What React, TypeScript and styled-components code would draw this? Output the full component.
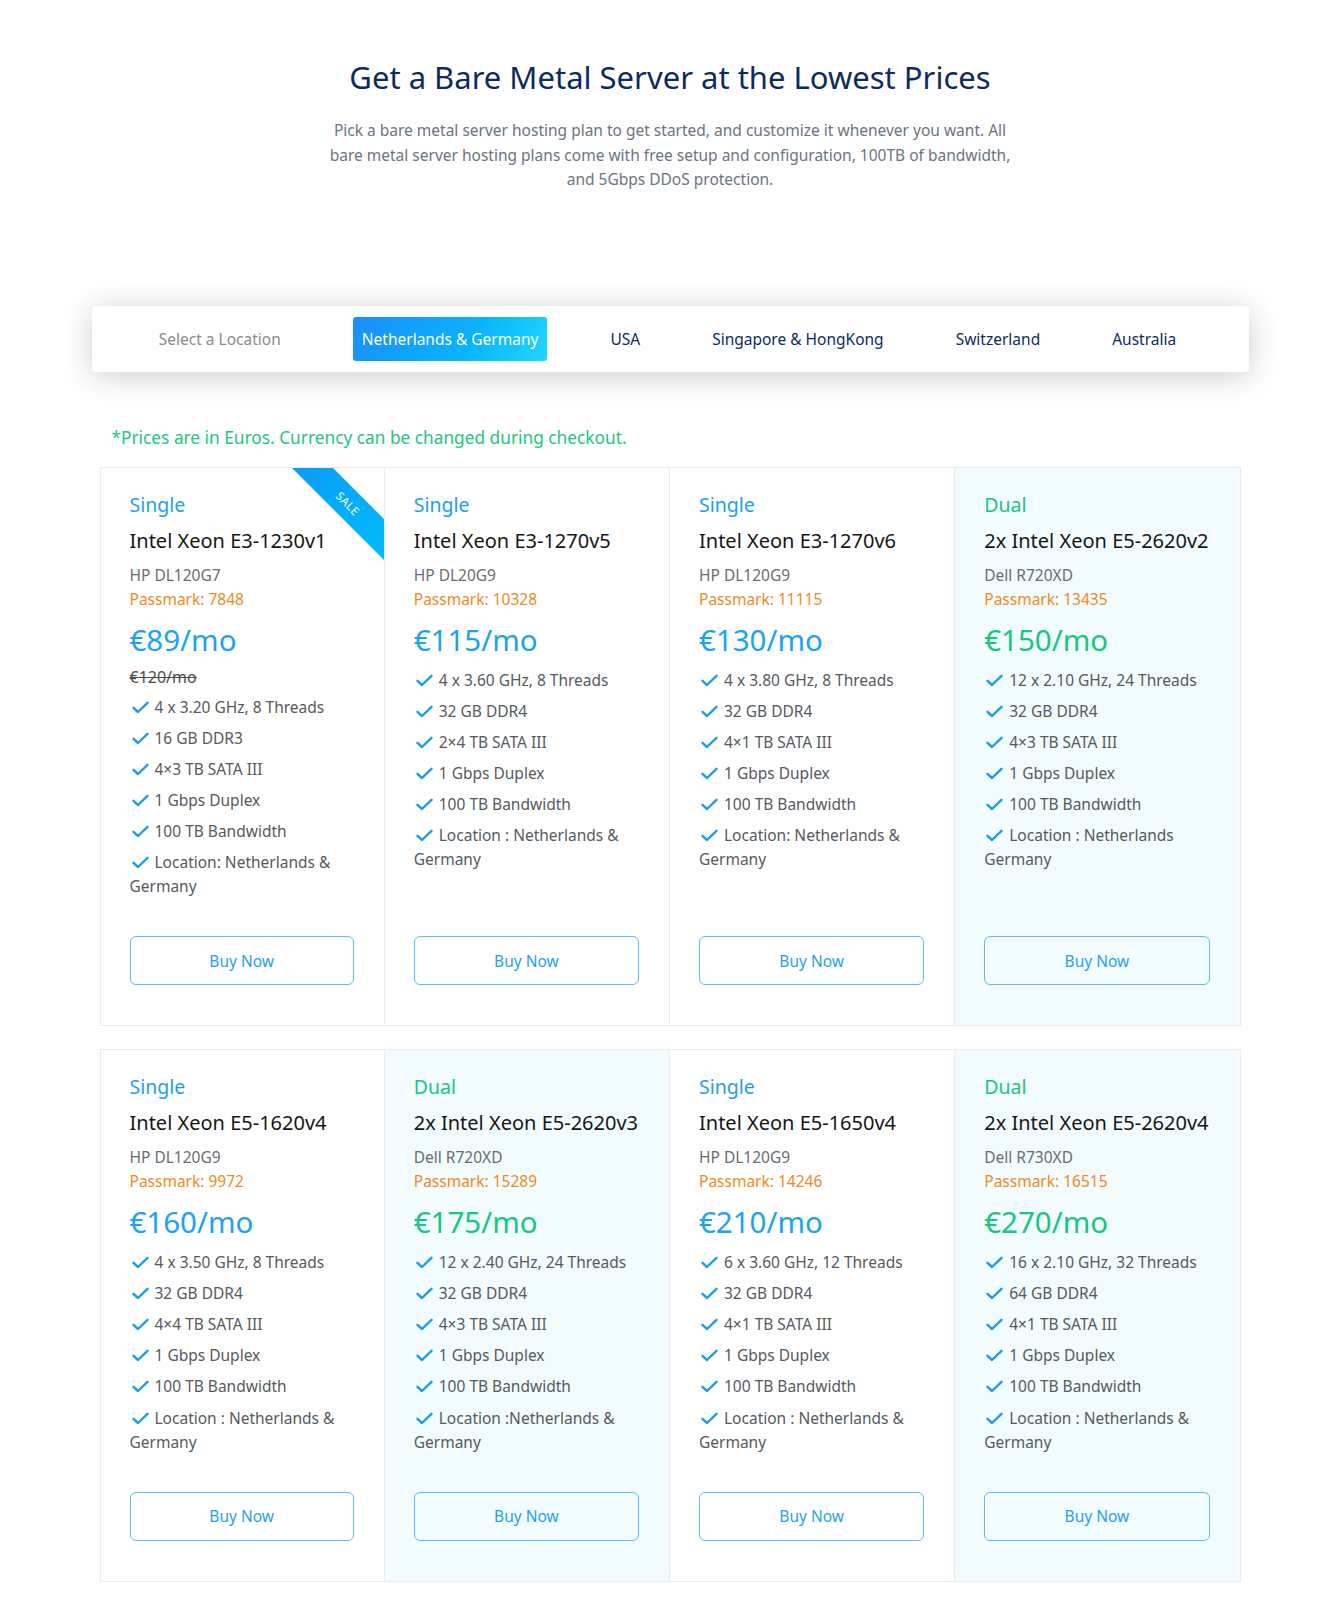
import React from 'react';
import styled, { createGlobalStyle } from 'styled-components';

const GlobalStyle = createGlobalStyle`
  html, body { margin: 0; padding: 0; background: #ffffff; }
  body {
    font-family: "Noto Sans", "Open Sans", sans-serif;
    -webkit-font-smoothing: antialiased;
  }
  * { box-sizing: border-box; }
`;

const Page = styled.div`
  padding: 0 0 18px 8px;
`;

const Container = styled.div`
  width: 1157px;
  margin: 0 auto;
`;

const Hero = styled.header`
  text-align: center;
  padding-top: 58px;
`;

const Title = styled.h1`
  margin: 0;
  font-size: 31px;
  line-height: 38px;
  font-weight: 400;
  color: #0b2c5f;
`;

const Lead = styled.p`
  margin: 22px auto 0;
  max-width: 690px;
  font-size: 15.5px;
  line-height: 24.5px;
  color: #6b7482;
`;

const LocationBar = styled.nav`
  margin-top: 114px;
  height: 66px;
  background: #fff;
  border-radius: 4px;
  box-shadow: 0 4px 30px rgba(0, 0, 0, 0.2);
  display: flex;
  align-items: center;
  justify-content: center;
  gap: 54px;
  padding-right: 6px;
`;

const BarLabel = styled.span`
  padding: 0 10px;
  margin-right: 8px;
  font-size: 15.5px;
  color: #8b8b8b;
`;

const LocationTab = styled.button<{ $active?: boolean }>`
  border: 0;
  font-family: inherit;
  font-size: 15.5px;
  height: 44px;
  padding: 0 9px;
  border-radius: 3px;
  cursor: pointer;
  color: ${(p) => (p.$active ? '#ffffff' : '#0b2c5f')};
  background: ${(p) =>
    p.$active ? 'linear-gradient(120deg, #1b8ef9 0%, #09b3fb 60%, #22d6ff 100%)' : 'transparent'};
`;

const Note = styled.p`
  margin: 54px 0 0;
  padding-left: 20px;
  font-size: 17.3px;
  line-height: 24px;
  color: #1fc67d;
`;

const PlanGrid = styled.div`
  margin: 17px 8px 0;
  display: grid;
  grid-template-columns: repeat(4, 1fr);
  row-gap: 23px;
`;

const Card = styled.article<{ $dual?: boolean }>`
  position: relative;
  overflow: hidden;
  display: flex;
  flex-direction: column;
  padding: 24px 30px 40px 29px;
  border: 1px solid #ececec;
  background: ${(p) => (p.$dual ? '#f2fbfe' : '#ffffff')};
  &:not(:nth-child(4n + 1)) {
    border-left: none;
  }
`;

const Ribbon = styled.div`
  position: absolute;
  top: 21px;
  right: -64px;
  width: 200px;
  height: 29px;
  transform: rotate(45deg);
  background: linear-gradient(90deg, #0a95f5, #03c2fb);
  color: #fff;
  font-size: 11.5px;
  letter-spacing: 0.5px;
  display: flex;
  align-items: center;
  justify-content: center;
`;

const Kind = styled.div<{ $dual?: boolean }>`
  font-size: 19.5px;
  line-height: 26px;
  color: ${(p) => (p.$dual ? '#18c683' : '#22a0ec')};
`;

const CpuName = styled.h3`
  margin: 10px 0 0;
  font-size: 20px;
  line-height: 26px;
  font-weight: 400;
  color: #161616;
`;

const Model = styled.div`
  margin-top: 9px;
  font-size: 15.5px;
  line-height: 24px;
  color: #686d74;
`;

const Passmark = styled.div`
  font-size: 15.5px;
  line-height: 24px;
  color: #ef8a22;
`;

const Price = styled.div<{ $dual?: boolean }>`
  margin-top: 9px;
  font-size: 29.5px;
  line-height: 40px;
  color: ${(p) => (p.$dual ? '#18c683' : '#1ba3ef')};
`;

const OldPrice = styled.div`
  margin: 5px 0 -2px;
  font-size: 16px;
  line-height: 24px;
  color: #4d4d4d;
  text-decoration: line-through;
`;

const Features = styled.ul`
  list-style: none;
  margin: 8px 0 0;
  padding: 0;
`;

const Feature = styled.li`
  font-size: 15.5px;
  line-height: 24.5px;
  color: #555a60;
  margin-bottom: 6.6px;
`;

const Check = styled.svg`
  display: inline-block;
  width: 17px;
  height: 13px;
  margin: 0 6px 0 2px;
  vertical-align: -1px;
`;

const BuyButton = styled.button`
  height: 49px;
  width: 100%;
  border: 1.5px solid #5bbfee;
  border-radius: 6px;
  background: transparent;
  color: #26a2e8;
  font-family: inherit;
  font-size: 15.5px;
  cursor: pointer;
`;

const ButtonSpacer = styled.div`
  min-height: 30.5px;
  flex: 1;
`;

type Plan = {
  kind: 'Single' | 'Dual';
  name: string;
  model: string;
  passmark: string;
  price: string;
  oldPrice?: string;
  sale?: boolean;
  features: string[];
};

const base = ['1 Gbps Duplex', '100 TB Bandwidth'];

const plans: Plan[] = [
  {
    kind: 'Single', name: 'Intel Xeon E3-1230v1', model: 'HP DL120G7', passmark: '7848', price: '€89/mo',
    oldPrice: '€120/mo', sale: true,
    features: ['4 x 3.20 GHz, 8 Threads', '16 GB DDR3', '4×3 TB SATA III', ...base, 'Location: Netherlands & Germany'],
  },
  {
    kind: 'Single', name: 'Intel Xeon E3-1270v5', model: 'HP DL20G9', passmark: '10328', price: '€115/mo',
    features: ['4 x 3.60 GHz, 8 Threads', '32 GB DDR4', '2×4 TB SATA III', ...base, 'Location : Netherlands & Germany'],
  },
  {
    kind: 'Single', name: 'Intel Xeon E3-1270v6', model: 'HP DL120G9', passmark: '11115', price: '€130/mo',
    features: ['4 x 3.80 GHz, 8 Threads', '32 GB DDR4', '4×1 TB SATA III', ...base, 'Location: Netherlands & Germany'],
  },
  {
    kind: 'Dual', name: '2x Intel Xeon E5-2620v2', model: 'Dell R720XD', passmark: '13435', price: '€150/mo',
    features: ['12 x 2.10 GHz, 24 Threads', '32 GB DDR4', '4×3 TB SATA III', ...base, 'Location : Netherlands Germany'],
  },
  {
    kind: 'Single', name: 'Intel Xeon E5-1620v4', model: 'HP DL120G9', passmark: '9972', price: '€160/mo',
    features: ['4 x 3.50 GHz, 8 Threads', '32 GB DDR4', '4×4 TB SATA III', ...base, 'Location : Netherlands & Germany'],
  },
  {
    kind: 'Dual', name: '2x Intel Xeon E5-2620v3', model: 'Dell R720XD', passmark: '15289', price: '€175/mo',
    features: ['12 x 2.40 GHz, 24 Threads', '32 GB DDR4', '4×3 TB SATA III', ...base, 'Location :Netherlands & Germany'],
  },
  {
    kind: 'Single', name: 'Intel Xeon E5-1650v4', model: 'HP DL120G9', passmark: '14246', price: '€210/mo',
    features: ['6 x 3.60 GHz, 12 Threads', '32 GB DDR4', '4×1 TB SATA III', ...base, 'Location : Netherlands & Germany'],
  },
  {
    kind: 'Dual', name: '2x Intel Xeon E5-2620v4', model: 'Dell R730XD', passmark: '16515', price: '€270/mo',
    features: ['16 x 2.10 GHz, 32 Threads', '64 GB DDR4', '4×1 TB SATA III', ...base, 'Location : Netherlands & Germany'],
  },
];

const locations = ['Netherlands & Germany', 'USA', 'Singapore & HongKong', 'Switzerland', 'Australia'];

const CheckIcon = () => (
  <Check viewBox="0 0 17 13" aria-hidden="true">
    <path d="M1.5 6.8 L6 11 L15.5 1.8" fill="none" stroke="#1e9de6" strokeWidth="2.4" strokeLinecap="round" strokeLinejoin="round" />
  </Check>
);

const PlanCard = ({ plan }: { plan: Plan }) => {
  const dual = plan.kind === 'Dual';
  return (
    <Card $dual={dual}>
      {plan.sale && <Ribbon>SALE</Ribbon>}
      <Kind $dual={dual}>{plan.kind}</Kind>
      <CpuName>{plan.name}</CpuName>
      <Model>{plan.model}</Model>
      <Passmark>Passmark: {plan.passmark}</Passmark>
      <Price $dual={dual}>{plan.price}</Price>
      {plan.oldPrice && <OldPrice>{plan.oldPrice}</OldPrice>}
      <Features>
        {plan.features.map((f) => (
          <Feature key={f}>
            <CheckIcon />
            {f}
          </Feature>
        ))}
      </Features>
      <ButtonSpacer />
      <BuyButton>Buy Now</BuyButton>
    </Card>
  );
};

export default function App() {
  return (
    <>
      <GlobalStyle />
      <Page>
        <Container>
          <Hero>
            <Title>Get a Bare Metal Server at the Lowest Prices</Title>
            <Lead>
              Pick a bare metal server hosting plan to get started, and customize it whenever you want. All bare
              metal server hosting plans come with free setup and configuration, 100TB of bandwidth, and 5Gbps DDoS
              protection.
            </Lead>
          </Hero>
          <LocationBar>
            <BarLabel>Select a Location</BarLabel>
            {locations.map((l, i) => (
              <LocationTab key={l} $active={i === 0}>
                {l}
              </LocationTab>
            ))}
          </LocationBar>
          <Note>*Prices are in Euros. Currency can be changed during checkout.</Note>
          <PlanGrid>
            {plans.map((p) => (
              <PlanCard key={p.name} plan={p} />
            ))}
          </PlanGrid>
        </Container>
      </Page>
    </>
  );
}
